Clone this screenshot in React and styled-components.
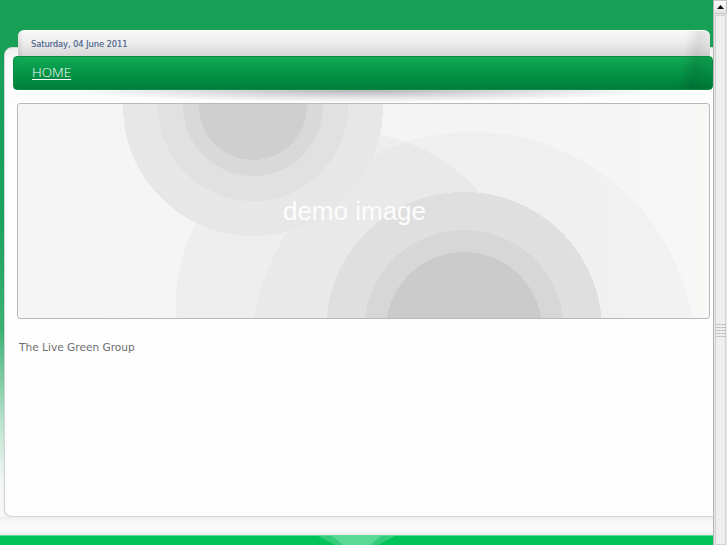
import styled, { createGlobalStyle } from "styled-components";

const GlobalStyle = createGlobalStyle`
  html, body {
    margin: 0;
    padding: 0;
    overflow: hidden;
  }
  body {
    font-family: "DejaVu Sans", Verdana, sans-serif;
  }
`;

const Window = styled.div`
  display: flex;
  width: 727px;
  height: 545px;
  overflow: hidden;
`;

const Viewport = styled.div`
  flex: 1;
  display: flex;
  flex-direction: column;
  overflow: hidden;
  padding: 30px 0 0 4px;
  background: linear-gradient(
    180deg,
    #189f56 0px,
    #1ba45b 220px,
    #3cb274 330px,
    #b7e2ca 420px,
    #f4f8f6 480px,
    #fafafa 100%
  );
`;

const DateTab = styled.div`
  position: relative;
  z-index: 1;
  margin-left: 14px;
  width: 692px;
  height: 27px;
  box-sizing: border-box;
  padding: 8px 0 0 13px;
  border-radius: 6px 6px 0 0;
  border-top: 1px solid #fdfdfd;
  background:
    linear-gradient(100deg, transparent 96%, rgba(0, 0, 0, 0.09) 98%, rgba(0, 0, 0, 0.03) 100%),
    linear-gradient(90deg, rgba(0, 0, 0, 0.08) 0, transparent 6px),
    linear-gradient(180deg, #f9f9f9 0%, #eeeeee 45%, #d6d6d6 100%);
  font-size: 8.2px;
  color: #52688e;
  line-height: 11px;
  text-shadow: 0.3px 0 0 rgba(82, 104, 142, 0.6);
`;

const Panel = styled.div`
  margin-top: -9px;
  width: 722px;
  height: 470px;
  flex-shrink: 0;
  box-sizing: border-box;
  padding-top: 8px;
  border: 1px solid #d2d5d9;
  border-radius: 8px;
  background: linear-gradient(180deg, #eeeeee 0, #fbfbfc 12px, #fdfdfe 60px);
  box-shadow: 0 1px 2px rgba(0, 0, 0, 0.12);
  display: flex;
  flex-direction: column;
`;

const NavBar = styled.nav`
  position: relative;
  margin-left: 8px;
  width: 700px;
  height: 34px;
  box-sizing: border-box;
  padding-left: 18px;
  display: flex;
  align-items: center;
  border-radius: 4px;
  border: 1px solid #0a8a42;
  background:
    linear-gradient(100deg, transparent 95%, rgba(0, 0, 0, 0.12) 97%, rgba(0, 0, 0, 0.05) 100%),
    linear-gradient(180deg, #10ab55 0%, #07984a 40%, #018a40 75%, #007d38 100%);

  &::after {
    content: "";
    position: absolute;
    left: 60px;
    right: 60px;
    top: 33px;
    height: 12px;
    background: radial-gradient(ellipse at 50% 0%, rgba(40, 50, 60, 0.35) 0%, rgba(40, 50, 60, 0.12) 45%, transparent 72%);
  }
`;

const NavLink = styled.a`
  font-family: "Open Sans", "Liberation Sans", sans-serif;
  font-weight: 300;
  font-size: 13.5px;
  color: #ffffff;
  text-decoration: underline;
  text-underline-offset: 2px;
  margin-top: -2px;
`;

const DemoImage = styled.div`
  margin: 13px 0 0 12px;
  width: 693px;
  height: 216px;
  box-sizing: border-box;
  padding-right: 18px;
  border: 1px solid #b9b9b9;
  border-radius: 3px;
  display: flex;
  align-items: center;
  justify-content: center;
  font-family: "Liberation Sans", Arial, sans-serif;
  font-size: 26px;
  color: rgba(255, 255, 255, 0.92);
  background:
    radial-gradient(circle at 235px 2px, #cfcfcf 0 54px, #d9d9d9 54px 70px, #e1e1e1 70px 95px, #e7e7e7 95px 130px, transparent 130px),
    radial-gradient(circle at 446px 226px, #cbcbcb 0 78px, #d7d7d7 78px 100px, #dfdfdf 100px 138px, transparent 138px),
    radial-gradient(circle at 330px 200px, rgba(0, 0, 0, 0.028) 0 172px, transparent 172px),
    radial-gradient(circle at 455px 250px, rgba(0, 0, 0, 0.018) 0 222px, transparent 222px),
    linear-gradient(90deg, #f5f5f5 0%, #f4f4f4 70%, #f8f7f6 100%);
`;

const Caption = styled.p`
  margin: 21px 0 0 14px;
  font-size: 10.6px;
  line-height: 14px;
  color: #6e6e6e;
`;

const Gap = styled.div`
  height: 18px;
  flex-shrink: 0;
  margin-left: -4px;
  background: linear-gradient(180deg, #ededed 0, #f8f8f8 5px, #fcfcfc 12px, #ececec 18px);
`;

const FooterStrip = styled.div`
  height: 9px;
  flex-shrink: 0;
  margin-left: -4px;
  padding-left: 318px;
  display: flex;
  background: #00c35a;
  border-top: 1px solid #5fd893;
`;

const ScrollBar = styled.div`
  width: 14px;
  flex-shrink: 0;
  display: flex;
  flex-direction: column;
  box-sizing: border-box;
  border-left: 1px solid #b4b4b4;
  background: #e6e6e6;
`;

const ArrowButton = styled.div`
  height: 14px;
  box-sizing: border-box;
  display: flex;
  align-items: center;
  justify-content: center;
  background: linear-gradient(180deg, #fafafa, #e2e2e2);
  border: 1px solid #c4c4c4;
  border-left: none;
`;

const Thumb = styled.div`
  flex: 1;
  margin: 1px 1px 0 1px;
  box-sizing: border-box;
  border: 1px solid #d2d2d2;
  background: #eeeeee;
  display: flex;
  flex-direction: column;
  align-items: center;
  padding-top: 307px;
`;

const Grip = styled.div`
  width: 10px;
  height: 15px;
  background-image: radial-gradient(circle, #a4a4a4 0.7px, transparent 0.9px);
  background-size: 2.5px 3px;
`;

const App = () => {
  return (
    <>
      <GlobalStyle />
      <Window>
        <Viewport>
          <DateTab>Saturday, 04 June 2011</DateTab>
          <Panel>
            <NavBar>
              <NavLink href="#">HOME</NavLink>
            </NavBar>
            <DemoImage>demo image</DemoImage>
            <Caption>The Live Green Group</Caption>
          </Panel>
          <Gap />
          <FooterStrip>
            <svg width="77" height="9" viewBox="0 0 77 9">
              <polygon points="0,0 77,0 60,9 17,9" fill="#33cc78" />
              <polygon points="14,0 63,0 52,9 25,9" fill="#5ad995" />
            </svg>
          </FooterStrip>
        </Viewport>
        <ScrollBar>
          <ArrowButton>
            <svg width="7" height="4" viewBox="0 0 7 4">
              <polygon points="3.5,0 7,4 0,4" fill="#111" />
            </svg>
          </ArrowButton>
          <Thumb>
            <Grip />
          </Thumb>
        </ScrollBar>
      </Window>
    </>
  );
};

export default App;
